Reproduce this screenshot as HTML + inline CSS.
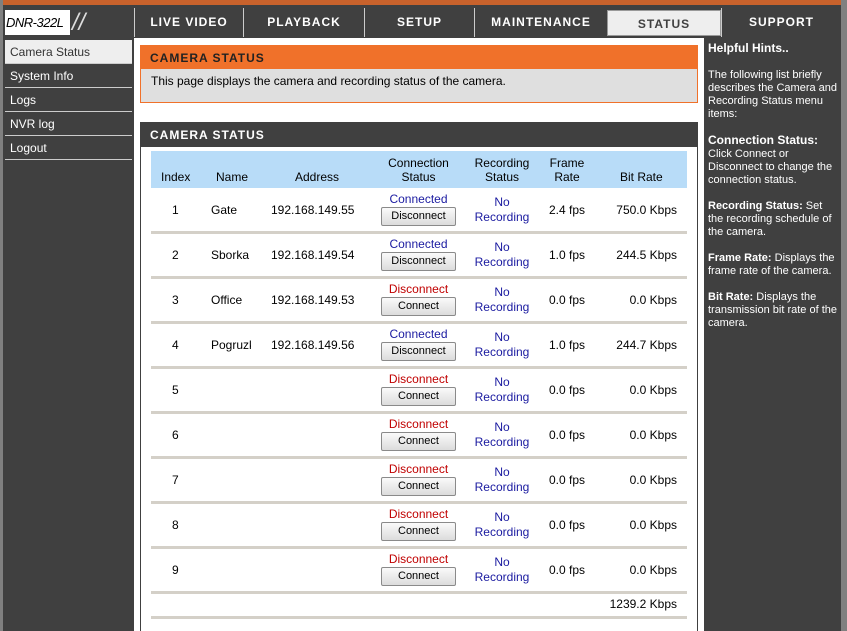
<!DOCTYPE html>
<html><head><meta charset="utf-8"><style>
*{margin:0;padding:0;box-sizing:border-box}
html,body{width:847px;height:631px;overflow:hidden}
body{background:#404040;font-family:"Liberation Sans",Tahoma,sans-serif;font-size:12px;position:relative}
.a{position:absolute}
.nav{position:absolute;top:8px;height:29px;background:#404040;color:#fff;font-weight:bold;font-size:12px;letter-spacing:1px;text-align:center;line-height:29px;border-left:1px solid #ccc}
.side{position:absolute;left:5px;width:127px;height:22px;color:#fff;font-size:12px;line-height:22px;padding-left:5px;border-bottom:1px solid #ccc}
.row{position:absolute;left:151px;width:536px;height:45px;border-bottom:3px solid #d4d0c8}
.row div{position:absolute}
.btn{left:230px;top:18px;width:75px;height:19px;border:1px solid #8a8a8a;border-radius:2px;background:linear-gradient(#fafafa,#dcdcdc);font-size:11px;text-align:center;line-height:17px;color:#000}
.hint{color:#fff;font-size:11px;line-height:13px}
</style></head><body>
<div class="a" style="left:0;top:0;width:847px;height:5px;background:#c8622c"></div>
<div class="a" style="left:0;top:0;width:3px;height:631px;background:#808080"></div>
<div class="a" style="left:841px;top:0;width:6px;height:631px;background:#808080"></div>
<div class="a" style="left:5px;top:10px;width:65px;height:25px;background:#fff;font-style:italic;font-size:13px;line-height:25px;padding-left:1px;color:#000;white-space:nowrap;overflow:hidden;letter-spacing:-0.5px">DNR-322L</div>
<div class="a" style="left:72px;top:10px;font-size:24px;color:#ddd;line-height:25px;font-style:italic">//</div>
<div class="nav" style="left:134px;width:109px">LIVE VIDEO</div>
<div class="nav" style="left:243px;width:121px">PLAYBACK</div>
<div class="nav" style="left:364px;width:110px">SETUP</div>
<div class="nav" style="left:474px;width:133px">MAINTENANCE</div>
<div class="nav" style="left:607px;width:114px;background:#eee;color:#404040;border:1px solid #999;top:10px;height:26px;line-height:26px">STATUS</div>
<div class="nav" style="left:721px;width:120px">SUPPORT</div>
<div class="side" style="top:40px;background:#eee;color:#333;height:24px;line-height:24px">Camera Status</div>
<div class="side" style="top:64px;height:24px;line-height:24px">System Info</div>
<div class="side" style="top:88px;height:24px;line-height:24px">Logs</div>
<div class="side" style="top:112px;height:24px;line-height:24px">NVR log</div>
<div class="side" style="top:136px;height:24px;line-height:24px">Logout</div>
<div class="a" style="left:134px;top:38px;width:570px;height:593px;background:#fff"></div>
<div class="a" style="left:140px;top:45px;width:558px;height:24px;background:#f0712a;color:#222;font-weight:bold;font-size:12px;letter-spacing:1px;line-height:26px;padding-left:10px">CAMERA STATUS</div>
<div class="a" style="left:140px;top:69px;width:558px;height:34px;background:#dfdfdf;border:1px solid #f0712a;border-top:none;padding:5px 10px;font-size:12px;color:#000">This page displays the camera and recording status of the camera.</div>
<div class="a" style="left:140px;top:122px;width:558px;height:25px;background:#404040;color:#fff;font-weight:bold;font-size:12px;letter-spacing:1px;line-height:26px;padding-left:10px">CAMERA STATUS</div>
<div class="a" style="left:140px;top:147px;width:558px;height:490px;border:1px solid #404040;border-top:none"></div>
<div class="a" style="left:151px;top:151px;width:536px;height:37px;background:#b8dcf8;font-size:12px;color:#000">
<div class="a" style="left:10px;top:19px">Index</div>
<div class="a" style="left:65px;top:19px">Name</div>
<div class="a" style="left:144px;top:19px">Address</div>
<div class="a" style="left:230px;top:5px;width:75px;text-align:center;line-height:14px">Connection<br>Status</div>
<div class="a" style="left:316px;top:5px;width:70px;text-align:center;line-height:14px">Recording<br>Status</div>
<div class="a" style="left:396px;top:5px;width:40px;text-align:center;line-height:14px">Frame<br>Rate</div>
<div class="a" style="left:469px;top:19px">Bit Rate</div>
</div>
<div id="rows"></div>
<div class="row" style="top:594px;height:25px"><div style="right:10px;top:3px">1239.2 Kbps</div></div>
<div class="a hint" style="left:708px;top:42px;width:132px">
<b style="font-size:12px">Helpful Hints..</b><br><br>
The following list briefly describes the Camera and Recording Status menu items:<br><br>
<b style="font-size:12px">Connection Status:</b><br>Click Connect or Disconnect to change the connection status.<br><br>
<b>Recording Status:</b> Set the recording schedule of the camera.<br><br>
<b>Frame Rate:</b> Displays the frame rate of the camera.<br><br>
<b>Bit Rate:</b> Displays the transmission bit rate of the camera.
</div>
<script>
var d=[["1","Gate","192.168.149.55",1,"2.4 fps","750.0 Kbps"],["2","Sborka","192.168.149.54",1,"1.0 fps","244.5 Kbps"],["3","Office","192.168.149.53",0,"0.0 fps","0.0 Kbps"],["4","Pogruzk","192.168.149.56",1,"1.0 fps","244.7 Kbps"],["5","","",0,"0.0 fps","0.0 Kbps"],["6","","",0,"0.0 fps","0.0 Kbps"],["7","","",0,"0.0 fps","0.0 Kbps"],["8","","",0,"0.0 fps","0.0 Kbps"],["9","","",0,"0.0 fps","0.0 Kbps"]];
var h="";d.forEach(function(r,i){var t=189+i*45;
h+='<div class="row" style="top:'+t+'px"><div style="left:21px;top:14px">'+r[0]+'</div><div style="left:60px;top:14px;width:40px;overflow:hidden;white-space:nowrap">'+r[1]+'</div><div style="left:120px;top:14px">'+r[2]+'</div>'+
'<div style="left:230px;top:3px;width:75px;text-align:center;color:'+(r[3]?'#1a1aa0':'#c00000')+'">'+(r[3]?'Connected':'Disconnect')+'</div>'+
'<div class="btn">'+(r[3]?'Disconnect':'Connect')+'</div>'+
'<div style="left:316px;top:6px;width:70px;text-align:center;color:#1a1aa0;line-height:15px">No<br>Recording</div>'+
'<div style="left:398px;top:14px">'+r[4]+'</div><div style="right:10px;top:14px">'+r[5]+'</div></div>';});
document.getElementById("rows").innerHTML=h;
</script>
</body></html>
